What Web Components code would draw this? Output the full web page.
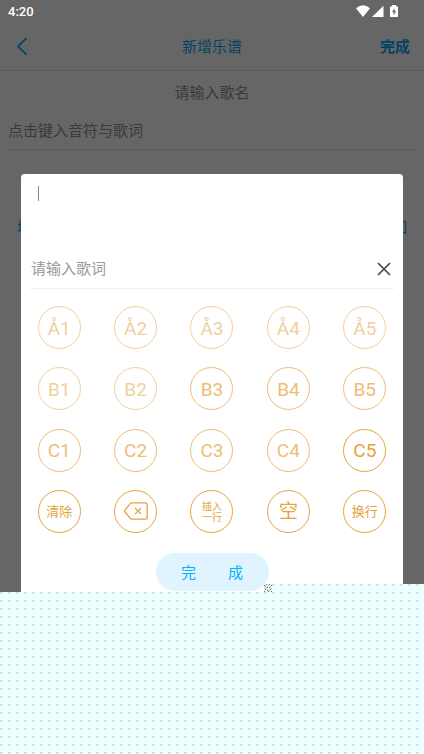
<!DOCTYPE html>
<html lang="zh-CN">
<head>
<meta charset="utf-8">
<meta name="viewport" content="width=device-width, initial-scale=1">
<title>新增乐谱</title>
<style>
  html, body { margin: 0; height: 100%; }
  body { font-family: Roboto, "Noto Sans CJK SC", sans-serif; font-size: 15px; line-height: 20px; background: #fff; }
</style>
</head>
<body>
<score-app></score-app>

<script>
const base = `
  *, *::before, *::after { box-sizing: border-box; }
  button, input, textarea { font: inherit; color: inherit; background: none; border: 0; padding: 0; margin: 0; outline: 0; min-width: 0; }
  ::placeholder { color: var(--hint, #999); opacity: 1; }
  svg { display: block; }
`;
function define(name, css, html, init) {
  customElements.define(name, class extends HTMLElement {
    constructor() {
      super();
      const t = document.createElement('template');
      t.innerHTML = `<style>${base}${css}</style>${html}`;
      this.attachShadow({ mode: 'open' }).append(t.content.cloneNode(true));
      if (init) init(this);
    }
  });
}

define('status-bar', `
  :host { display: flex; justify-content: space-between; align-items: center; height: 23px; padding: 0 26px 0 8px; color: #fff; font-size: 13px; font-weight: 500; }
  .icons { display: flex; align-items: center; }
`, `
  <span>4:20</span>
  <span class="icons">
    <svg width="42" height="13" viewBox="0 0 42 13" fill="#fff" aria-hidden="true">
      <path d="M0 3.2Q7-2.8 14 3.2L7 12Z"/>
      <path d="M16 12L27.5 .8V12Z"/>
      <path fill-rule="evenodd" d="M36 0h4v1.2h1.2q.8 0 .8.8v9.2q0 .8-.8.8h-6.4q-.8 0-.8-.8V2q0-.8.8-.8H36ZM38.6 3.2L36 7h1.6v3.2L40.2 6.2h-1.6Z"/>
    </svg>
  </span>
`);

define('nav-bar', `
  :host { display: grid; grid-template-columns: 1fr auto 1fr; align-items: center; height: 48px; padding: 0 14px; border-bottom: 1px solid #e6e6e6; color: #08a8f8; }
  h1 { margin: 0; font: inherit; }
  .done { justify-self: end; font-weight: 700; }
  .back { justify-self: start; width: 16px; height: 20px; }
`, `
  <button class="back" aria-label="返回"><svg width="16" height="20" viewBox="0 0 16 20" fill="none" stroke="currentColor" stroke-width="1.8"><path d="M12.5 1L4 9.4L12.5 17.6"/></svg></button>
  <h1><slot></slot></h1>
  <button class="done">完成</button>
`);

define('score-form', `
  :host { display: flex; flex-direction: column; padding: 12px 8px 0; --hint: #929292; }
  input { width: 100%; height: 20px; line-height: 20px; }
  .name { text-align: center; }
  .notes { height: 47px; padding-top: 10px; border-bottom: 1px solid #e6e6e6; }
  .tools { display: flex; justify-content: space-between; margin-top: 67px; padding: 0 9px; color: #08a8f8; font-size: 14px; }
`, `
  <input class="name" aria-label="歌名" placeholder="请输入歌名">
  <input class="notes" aria-label="音符与歌词" placeholder="点击键入音符与歌词">
  <div class="tools"><button>增加</button><button>撤回</button></div>
`);

define('note-key', `
  :host { display: block; opacity: var(--strength, 1); }
  :host([level="low"]) { --strength: .5; }
  :host([level="mid"]) { --strength: .7; }
  button { display: grid; place-items: center; width: 43px; height: 43px; padding-top: 2px; border: 1px solid #e6a23c; border-radius: 50%; color: #e6a23c; font-size: 19px; line-height: 20px; }
  :host([size="small"]) button { font-size: 13px; }
  :host([size="tiny"]) button { font-size: 10px; line-height: 11px; }
  :host([size="icon"]) button { padding-top: 0; }
`, `<button><span><slot></slot></span></button>`, el => {
  if (el.getAttribute('label')) el.shadowRoot.querySelector('button').setAttribute('aria-label', el.getAttribute('label'));
});

define('note-dialog', `
  :host { display: flex; flex-direction: column; background: #fff; border-radius: 4px; --hint: #999; }
  .notes { position: relative; height: 76px; padding: 9px 17px; }
  textarea { display: block; width: 100%; height: 58px; resize: none; }
  .caret { position: absolute; left: 17px; top: 12px; width: 1px; height: 15px; background: #888; }
  .lyric { display: flex; align-items: center; height: 39px; margin: 0 9px; padding: 0 3px 0 1px; border-bottom: 1px solid #f0f0f0; }
  .lyric input { flex: 1; height: 20px; }
  .keys { display: grid; grid-template-columns: repeat(5, 1fr); justify-items: center; align-content: space-between; min-height: 227px; margin-top: 17px; }
  .ok { display: flex; justify-content: center; align-items: center; gap: 32px; align-self: center; width: 113px; height: 38px; margin: 20px 0; padding-top: 2px; border-radius: 19px; background: #dff4ff; color: #08b0f8; }
`, `
  <div class="notes"><textarea aria-label="音符"></textarea><span class="caret"></span></div>
  <div class="lyric">
    <input aria-label="歌词" placeholder="请输入歌词">
    <button aria-label="关闭"><svg width="14" height="14" viewBox="0 0 14 14" stroke="#4a4a4a" stroke-width="1.7"><path d="M1 1L13 13M13 1L1 13"/></svg></button>
  </div>
  <div class="keys">
    <note-key level="low">Å1</note-key><note-key level="low">Å2</note-key><note-key level="low">Å3</note-key><note-key level="low">Å4</note-key><note-key level="low">Å5</note-key>
    <note-key level="low">B1</note-key><note-key level="low">B2</note-key><note-key level="mid">B3</note-key><note-key level="mid">B4</note-key><note-key level="mid">B5</note-key>
    <note-key level="mid">C1</note-key><note-key level="mid">C2</note-key><note-key level="mid">C3</note-key><note-key level="mid">C4</note-key><note-key>C5</note-key>
    <note-key size="small">清除</note-key>
    <note-key size="icon" label="删除"><svg width="24" height="18" viewBox="0 0 24 18" fill="none" stroke="currentColor" stroke-width="1.3" stroke-linejoin="round" color="#e6a23c"><path d="M8 .8H21Q23.2 .8 23.2 3V15Q23.2 17.2 21 17.2H8Q7 17.2 6.3 16.4L1 10Q.3 9 1 8L6.3 1.6Q7 .8 8 .8Z"/><path d="M11 6L17 12M17 6L11 12"/></svg></note-key>
    <note-key size="tiny">插入<br>一行</note-key>
    <note-key>空</note-key>
    <note-key size="small">换行</note-key>
  </div>
  <button class="ok"><span>完</span><span>成</span></button>
`);

define('dot-pattern', `
  :host { display: block; background: #ebffff; }
  svg { width: 100%; height: 100%; }
`, `
  <svg aria-hidden="true" shape-rendering="crispEdges">
    <defs><pattern id="dots" width="8" height="8" patternUnits="userSpaceOnUse">
      <rect width="1" height="1" fill="#a9c0c0"/><rect x="2" width="1" height="1" fill="#cde2e2"/>
      <rect x="1" y="1" width="1" height="1" fill="#c6dcdc"/><rect y="2" width="1" height="1" fill="#d6eaea"/>
    </pattern></defs>
    <rect width="100%" height="100%" fill="url(#dots)"/>
  </svg>
`);

define('score-app', `
  :host { display: block; position: relative; min-height: 100vh; overflow: hidden; background: #fff; }
  .scrim { position: absolute; inset: 0; background: rgba(0,0,0,.6); }
  status-bar { position: relative; z-index: 1; }
  note-dialog { position: absolute; left: 21px; right: 21px; top: 174px; }
  .fill { position: absolute; left: 0; right: 0; top: 592px; bottom: 0; }
  .strip { position: absolute; left: 272px; right: 0; top: 584px; height: 8px; }
  .speck { position: absolute; left: 264px; top: 584px; }
`, `
  <status-bar></status-bar>
  <nav-bar>新增乐谱</nav-bar>
  <score-form></score-form>
  <div class="scrim"></div>
  <note-dialog role="dialog" aria-label="输入音符"></note-dialog>
  <dot-pattern class="fill"></dot-pattern>
  <dot-pattern class="strip"></dot-pattern>
  <svg class="speck" width="8" height="8" viewBox="0 0 8 8" shape-rendering="crispEdges" aria-hidden="true">
    <path fill="#e8f4ef" d="M0 0h8v8H0z"/>
    <path fill="#66756f" d="M0 1h1v1H0zM2 0h1v1H2zM5 0h1v1H5zM7 1h1v1H7zM1 2h1v1H1zM3 3h1v1H3zM5 3h1v1H5zM1 5h1v1H1zM3 6h1v1H3zM6 5h1v1H6zM0 7h1v1H0zM4 7h1v1H4zM7 7h1v1H7z"/>
    <path fill="#a9b8ac" d="M4 1h1v1H4zM6 2h1v1H6zM2 4h1v1H2zM7 4h1v1H7zM5 6h1v1H5zM0 4h1v1H0z"/>
  </svg>
`);
</script>
</body>
</html>
